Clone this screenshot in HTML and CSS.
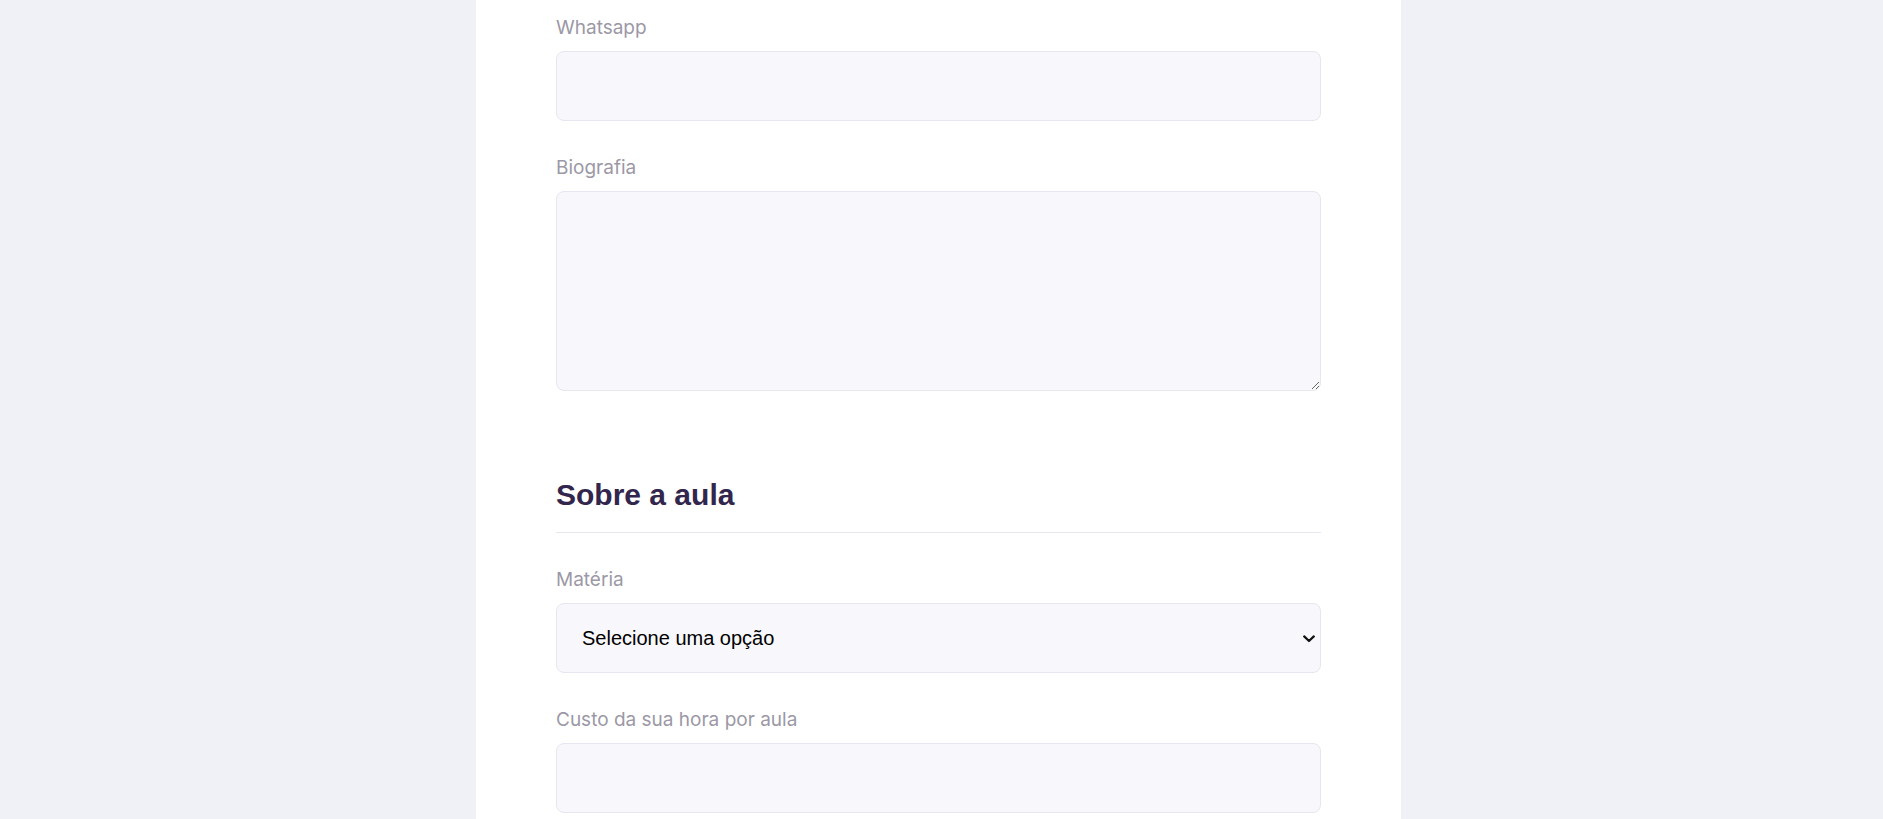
FILE: index.html
```html
<!DOCTYPE html>
<html lang="pt-BR">
<head>
<meta charset="utf-8">
<title>Proffy - Dar aulas</title>
<link rel="stylesheet" href="styles.css">
</head>
<body>
<div class="page">
  <main class="card">
    <div class="field">
      <label class="label" for="whatsapp">Whatsapp</label>
      <input id="whatsapp" class="control" type="text">
    </div>
    <div class="field">
      <label class="label" for="bio">Biografia</label>
      <textarea id="bio" class="control area"></textarea>
    </div>
    <h2 class="section-title">Sobre a aula</h2>
    <div class="field">
      <label class="label" for="subject">Matéria</label>
      <div class="select-wrap">
        <select id="subject" class="control select">
          <option value="">Selecione uma opção</option>
          <option value="1">Artes</option>
          <option value="2">Biologia</option>
        </select>
        <svg class="chevron" width="12" height="8" viewBox="0 0 12 8" aria-hidden="true">
          <polyline points="1.2,1.4 6,6 10.8,1.4" fill="none" stroke="#111" stroke-width="2.2" stroke-linecap="round" stroke-linejoin="round"/>
        </svg>
      </div>
    </div>
    <div class="field">
      <label class="label" for="cost">Custo da sua hora por aula</label>
      <input id="cost" class="control" type="text">
    </div>
  </main>
</div>
</body>
</html>
```
FILE: styles.css
```css
html, body {
  margin: 0;
  height: 100%;
  overflow: hidden;
}

body {
  background: #F0F0F7;
  font-family: Inter, "Noto Sans", sans-serif;
}

.page {
  display: flex;
  justify-content: center;
  padding-right: 6px;
  height: 100%;
}

.card {
  width: 925px;
  box-sizing: border-box;
  background: #FFFFFF;
  padding: 13px 80px 0;
  display: flex;
  flex-direction: column;
  gap: 32px;
}

.field {
  display: flex;
  flex-direction: column;
  gap: 10px;
}

.label {
  padding-top: 1px;
  font-size: 19px;
  line-height: 27px;
  color: #9C98A6;
}

.control {
  box-sizing: border-box;
  width: 100%;
  height: 70px;
  margin: 0;
  background: #F8F8FC;
  border: 1px solid #E6E6F0;
  border-radius: 8px;
  outline: none;
  padding: 0 24px;
  font-family: "Liberation Sans", Arial, sans-serif;
  font-size: 20px;
  color: #000000;
}

.area {
  height: 200px;
  padding: 12px 24px;
  resize: vertical;
  display: block;
}

.select-wrap {
  position: relative;
}

.select {
  display: block;
  appearance: none;
  -webkit-appearance: none;
  padding: 0 30px 0 25px;
}

.chevron {
  position: absolute;
  right: 6px;
  top: 50%;
  margin-top: -3px;
  pointer-events: none;
}

.section-title {
  margin: 54px 0 0;
  padding-bottom: 19px;
  border-bottom: 1px solid #E6E6F0;
  font-family: "Liberation Sans", Arial, sans-serif;
  font-weight: 700;
  font-size: 30px;
  line-height: 36px;
  color: #32264D;
}
```
